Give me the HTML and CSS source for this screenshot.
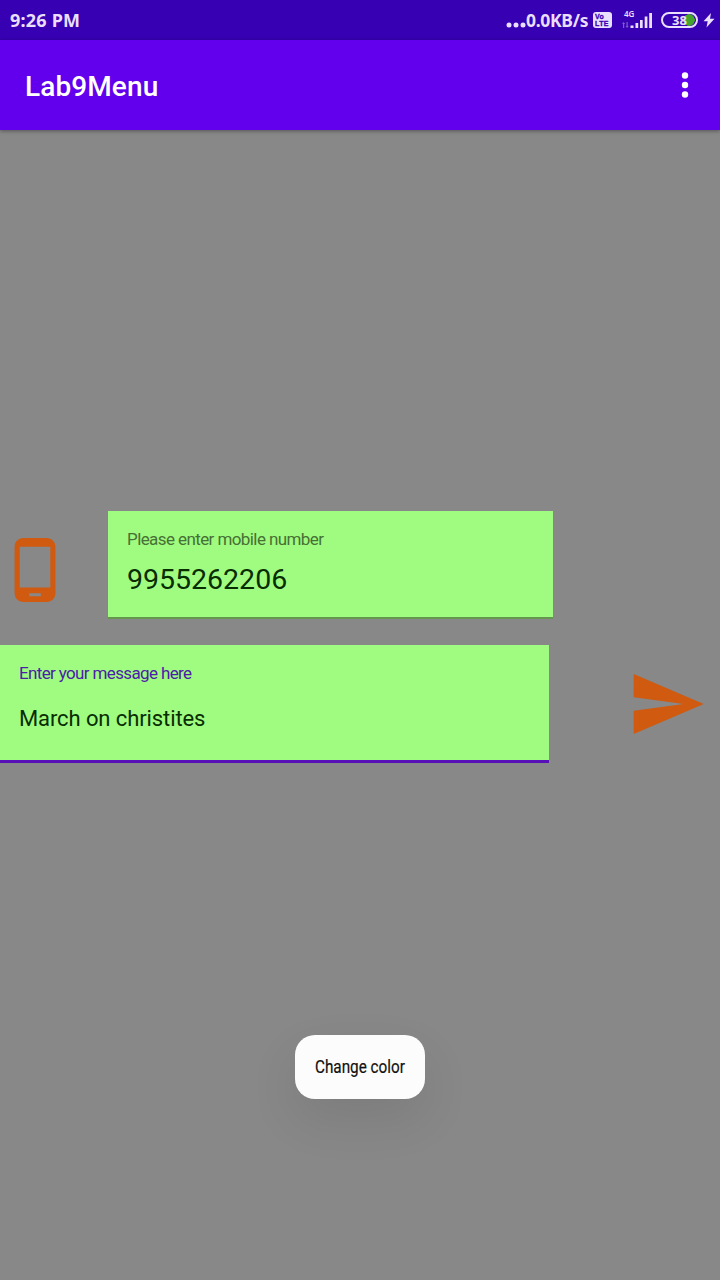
FILE: index.html
```html
<!DOCTYPE html>
<html lang="en">
<head>
<meta charset="utf-8">
<title>Lab9Menu</title>
<link rel="stylesheet" href="styles.css">
</head>
<body>
<header class="status-bar">
  <span class="clock">9:26 PM</span>
  <div class="status-right">
    <svg class="dots" width="20" height="6" viewBox="0 0 20 6"><circle cx="3" cy="3" r="2.5"/><circle cx="10" cy="3" r="2.5"/><circle cx="17" cy="3" r="2.5"/></svg>
    <span class="speed">0.0KB/s</span>
    <span class="volte">Vo<br>LTE</span>
    <span class="network">
      <span class="network-type">4G</span>
      <svg width="33" height="17" viewBox="0 0 33 17">
        <path class="faint" d="M3 12h1.200v4H3zM2 12l1.600-2 1.600 2zM6.500 10h1.200v4H6.500zM5.500 14h3.200L7.100 16z"/>
        <path d="M10.500 13.500h3V16h-3zM15.500 11h2.700v5h-2.700zM20 8h2.700v8H20zM24.700 4.500h2.700V16h-2.700zM29.200 1h2.800v15h-2.800z"/>
      </svg>
    </span>
    <span class="battery"><span class="level">38</span></span>
    <svg class="bolt" width="12" height="18" viewBox="0 0 12 18"><path d="M8 2L.500 10.200h4.200L3.500 16.500 11.500 7.700H7z"/></svg>
  </div>
</header>
<div class="app-bar">
  <h1 class="title">Lab9Menu</h1>
  <svg class="overflow" width="10" height="30" viewBox="0 0 10 30"><circle cx="5" cy="5.500" r="3.200"/><circle cx="5" cy="15" r="3.200"/><circle cx="5" cy="24.500" r="3.200"/></svg>
</div>
<main class="content">
  <div class="row number-row">
    <svg class="phone" viewBox="0 0 24 24"><path d="M16 1H8C6.340 1 5 2.340 5 4v16c0 1.660 1.340 3 3 3h8c1.660 0 3-1.340 3-3V4c0-1.660-1.340-3-3-3zm-2 20h-4v-1h4v1zm3.250-3H6.750V4h10.500v14z"/></svg>
    <div class="field number-field">
      <span class="label">Please enter mobile number</span>
      <span class="value">9955262206</span>
    </div>
  </div>
  <div class="row message-row">
    <div class="field message-field">
      <span class="label">Enter your message here</span>
      <span class="value">March on christites</span>
    </div>
    <svg class="send" viewBox="0 0 24 24"><path d="M2.010 21L23 12 2.010 3 2 10l15 2-15 2z"/></svg>
  </div>
  <div class="toast"><span>Change color</span></div>
</main>
</body>
</html>
```
FILE: styles.css
```css
* { box-sizing: border-box; }
body {
  margin: 0;
  width: 720px;
  height: 1280px;
  display: flex;
  flex-direction: column;
  background: #888;
  font-family: Roboto, sans-serif;
  overflow: hidden;
  white-space: nowrap;
}
svg { display: block; flex: none; }
.status-bar {
  height: 40px;
  flex: none;
  display: flex;
  justify-content: space-between;
  align-items: center;
  padding: 0 5px 0 10px;
  background: #3700b3;
  color: #eadfff;
  fill: #eadfff;
  font-family: "Noto Sans", sans-serif;
  font-weight: 600;
}
.clock { font-size: 18px; font-weight: 700; letter-spacing: 0.2px; }
.status-right { display: flex; align-items: center; }
.dots { margin-top: 9px; }
.speed { width: 67px; font-size: 17.5px; font-weight: 700; letter-spacing: -0.3px; }
.volte {
  width: 19px;
  height: 16px;
  border-radius: 3px;
  background: #eadfff;
  color: #3700b3;
  padding: 1px 0 0 2px;
  font-family: "Liberation Sans", sans-serif;
  font-size: 7px;
  line-height: 7px;
  letter-spacing: 0.4px;
  font-weight: 700;
  -webkit-text-stroke: 0.3px #3700b3;
}
.network { position: relative; margin-left: 8px; }
.network-type { position: absolute; left: 4px; top: -2px; font-size: 8px; line-height: 8px; }
.faint { opacity: 0.4; }
.battery {
  width: 37px;
  height: 16px;
  margin-left: 8px;
  border: 2px solid #eadfff;
  border-radius: 8px;
  background: radial-gradient(circle at 26px 6px, #44a52c 5.5px, transparent 6px);
  text-align: center;
  font-size: 13px;
  line-height: 12px;
  font-weight: 700;
}
.bolt { margin-left: 5px; }
.app-bar {
  height: 90px;
  flex: none;
  display: flex;
  align-items: center;
  justify-content: space-between;
  padding: 2px 30px 0 25px;
  background: #6200ee;
  color: #fff;
  fill: #fff;
  box-shadow: 0 1px 4px rgba(0, 0, 0, 0.4);
}
.title { margin: 0; font-size: 28px; font-weight: 500; letter-spacing: 0.1px; }
.overflow { margin-top: -2px; }
.content { flex: 1; display: flex; flex-direction: column; padding-top: 381px; }
.row { display: flex; fill: #d05a10; }
.phone { width: 70px; height: 70px; margin: 24px 38px 0 0; }
.field { display: flex; flex-direction: column; background: #a0fc80; color: #082d00; }
.label { font-size: 17px; line-height: 20px; }
.number-field { width: 445px; height: 108px; padding: 18px 19px; border-bottom: 2px solid #659650; }
.number-field .label { color: #467034; letter-spacing: -0.59px; }
.number-field .value { margin-top: 13px; font-size: 28.5px; line-height: 36px; }
.message-row { margin-top: 26px; }
.message-field { width: 549px; height: 118px; padding: 18px 19px; border-bottom: 3px solid #5610b5; }
.message-field .label { color: #4b20a8; letter-spacing: -0.64px; }
.message-field .value { margin-top: 22px; font-size: 22px; line-height: 28px; letter-spacing: -0.1px; }
.send { width: 80px; height: 80px; margin: 19px 0 0 78px; }
.toast {
  align-self: center;
  width: 130px;
  height: 64px;
  margin-top: 272px;
  border-radius: 20px;
  display: flex;
  align-items: center;
  justify-content: center;
  padding-bottom: 1px;
  background: #fcfcfc;
  color: #111;
  font-size: 18px;
  box-shadow: 0 20px 50px rgba(0, 0, 0, 0.09);
}
.toast span { transform: scaleX(0.85); -webkit-text-stroke: 0.2px #111; }
```
